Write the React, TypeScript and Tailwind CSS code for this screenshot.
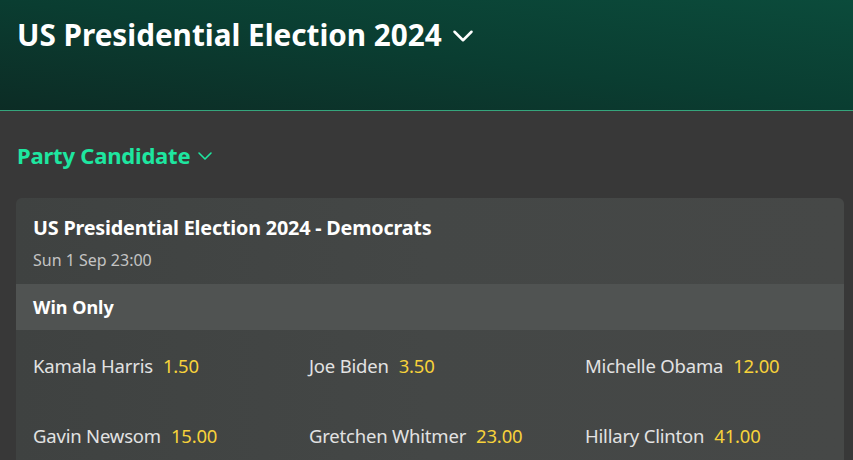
import { ChevronDown } from "lucide-react";

const runners = [
  { name: "Kamala Harris", odds: "1.50" },
  { name: "Joe Biden", odds: "3.50" },
  { name: "Michelle Obama", odds: "12.00" },
  { name: "Gavin Newsom", odds: "15.00" },
  { name: "Gretchen Whitmer", odds: "23.00" },
  { name: "Hillary Clinton", odds: "41.00" },
];

export default function App() {
  return (
    <div className="min-h-[460px] bg-[#383838] font-['Noto_Sans',sans-serif] overflow-hidden">
      <header className="h-[111px] bg-gradient-to-tr from-[#0c2c25] via-[#0a3d31] to-[#0b4b3b] border-b border-[#35a57c] px-[17px] pt-[12px]">
        <h1 className="flex items-center gap-1 text-white font-bold text-[29.7px] leading-[46px]">
          US Presidential Election 2024
          <ChevronDown className="w-[34px] h-[34px] mt-0.5" strokeWidth={1.8} />
        </h1>
      </header>

      <main className="px-4 pt-[28px]">
        <h2 className="flex items-center gap-[3px] pl-px text-[#1ee6a0] font-bold text-[22px] tracking-[-0.2px] leading-8">
          Party Candidate
          <ChevronDown className="w-6 h-6 mt-0.5" strokeWidth={1.6} />
        </h2>

        <section className="mt-[27px] w-[828px] rounded-md bg-gradient-to-r from-[#3f4241] via-[#444746] to-[#464847] overflow-hidden">
          <div className="px-[17px] pt-[18px] h-[86px]">
            <h3 className="text-white font-bold text-[19.8px] tracking-[-0.2px] leading-6">
              US Presidential Election 2024 - Democrats
            </h3>
            <p className="mt-[8px] text-[#c4c4c4] text-[16px]">Sun 1 Sep 23:00</p>
          </div>
          <div className="h-[46px] bg-[#505352] px-[17px] flex items-center text-white font-bold text-[18px]">
            Win Only
          </div>
          <div className="grid grid-cols-[276px_276px_276px] pl-[17px] pt-[1px]">
            {runners.map((r) => (
              <div key={r.name} className="h-[70px] flex items-center gap-2.5 text-[18.5px] tracking-[-0.2px]">
                <span className="text-[#e2e2e2]">{r.name}</span>
                <span className="text-[#f7d23a]">{r.odds}</span>
              </div>
            ))}
          </div>
        </section>
      </main>
    </div>
  );
}
